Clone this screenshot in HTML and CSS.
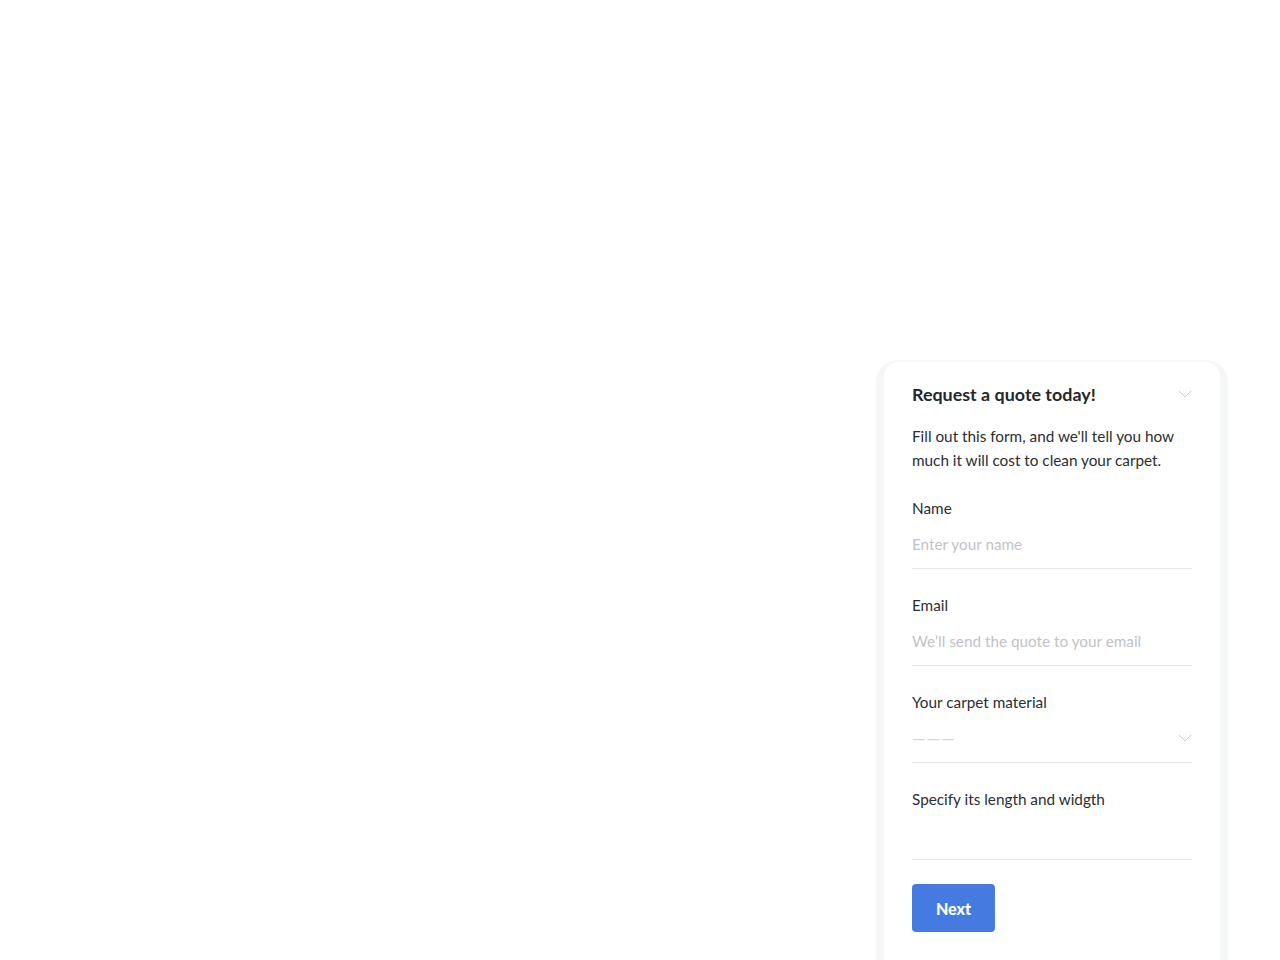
FILE: index.html
```html
<!DOCTYPE html>
<html lang="en">
<head>
<meta charset="utf-8">
<title>Request a quote</title>
<link rel="stylesheet" href="styles.css">
</head>
<body>
<main class="page">
  <section class="card">
    <header class="card-head">
      <h1 class="title">Request a quote today!</h1>
      <svg class="chev" width="14" height="8" viewBox="0 0 14 8"><path d="M1 1l6 6 6-6" fill="none" stroke="#c9cccf" stroke-width="1"/></svg>
    </header>
    <p class="intro">Fill out this form, and we'll tell you how much it will cost to clean your carpet.</p>
    <form class="form">
      <label class="field">
        <span class="label">Name</span>
        <span class="input placeholder">Enter your name</span>
      </label>
      <label class="field">
        <span class="label">Email</span>
        <span class="input placeholder">We’ll send the quote to your email</span>
      </label>
      <label class="field">
        <span class="label">Your carpet material</span>
        <span class="input select"><span class="placeholder dashes">———</span>
          <svg class="chev" width="14" height="8" viewBox="0 0 14 8"><path d="M1 1l6 6 6-6" fill="none" stroke="#c9cccf" stroke-width="1"/></svg>
        </span>
      </label>
      <label class="field">
        <span class="label">Specify its length and widgth</span>
        <span class="input"></span>
      </label>
      <button type="button" class="btn">Next</button>
    </form>
  </section>
</main>
</body>
</html>
```
FILE: styles.css
```css
html, body {
  margin: 0;
  height: 100%;
  overflow: hidden;
  background: #ffffff;
}
body {
  font-family: "Lato", "Open Sans", sans-serif;
  color: #2a2e33;
}
.page {
  display: flex;
  justify-content: flex-end;
  padding: 362px 60px 0 0;
}
.card {
  width: 336px;
  box-sizing: border-box;
  padding: 20px 28px 40px;
  background: #fff;
  border-radius: 14px;
  box-shadow: 0 6px 1px 8px #f5f6f6;
}
.card-head {
  display: flex;
  align-items: center;
  justify-content: space-between;
  height: 24px;
}
.title {
  margin: 0;
  font-size: 17.9px;
  font-weight: 700;
  line-height: 24px;
  color: #24282c;
}
.chev { display: block; }
.intro {
  margin: 18px 0 24px;
  font-size: 15.3px;
  line-height: 24px;
  color: #2a2e33;
}
.form {
  display: flex;
  flex-direction: column;
  gap: 24px;
}
.field {
  display: flex;
  flex-direction: column;
}
.label {
  font-size: 15.3px;
  line-height: 24px;
  color: #2a2e33;
}
.input {
  height: 48px;
  display: flex;
  align-items: center;
  border-bottom: 1px solid #e6e7e8;
  font-size: 15.3px;
}
.placeholder { color: #bfc3c7; }
.select {
  justify-content: space-between;
}
.dashes { letter-spacing: 1px; font-size: 17px; color: #d3d6d9; }
.btn {
  align-self: flex-start;
  width: 83px;
  height: 48px;
  border: 0;
  border-radius: 4px;
  background: #457be0;
  color: #fff;
  font-family: inherit;
  font-weight: 900;
  font-size: 16px;
}
```
